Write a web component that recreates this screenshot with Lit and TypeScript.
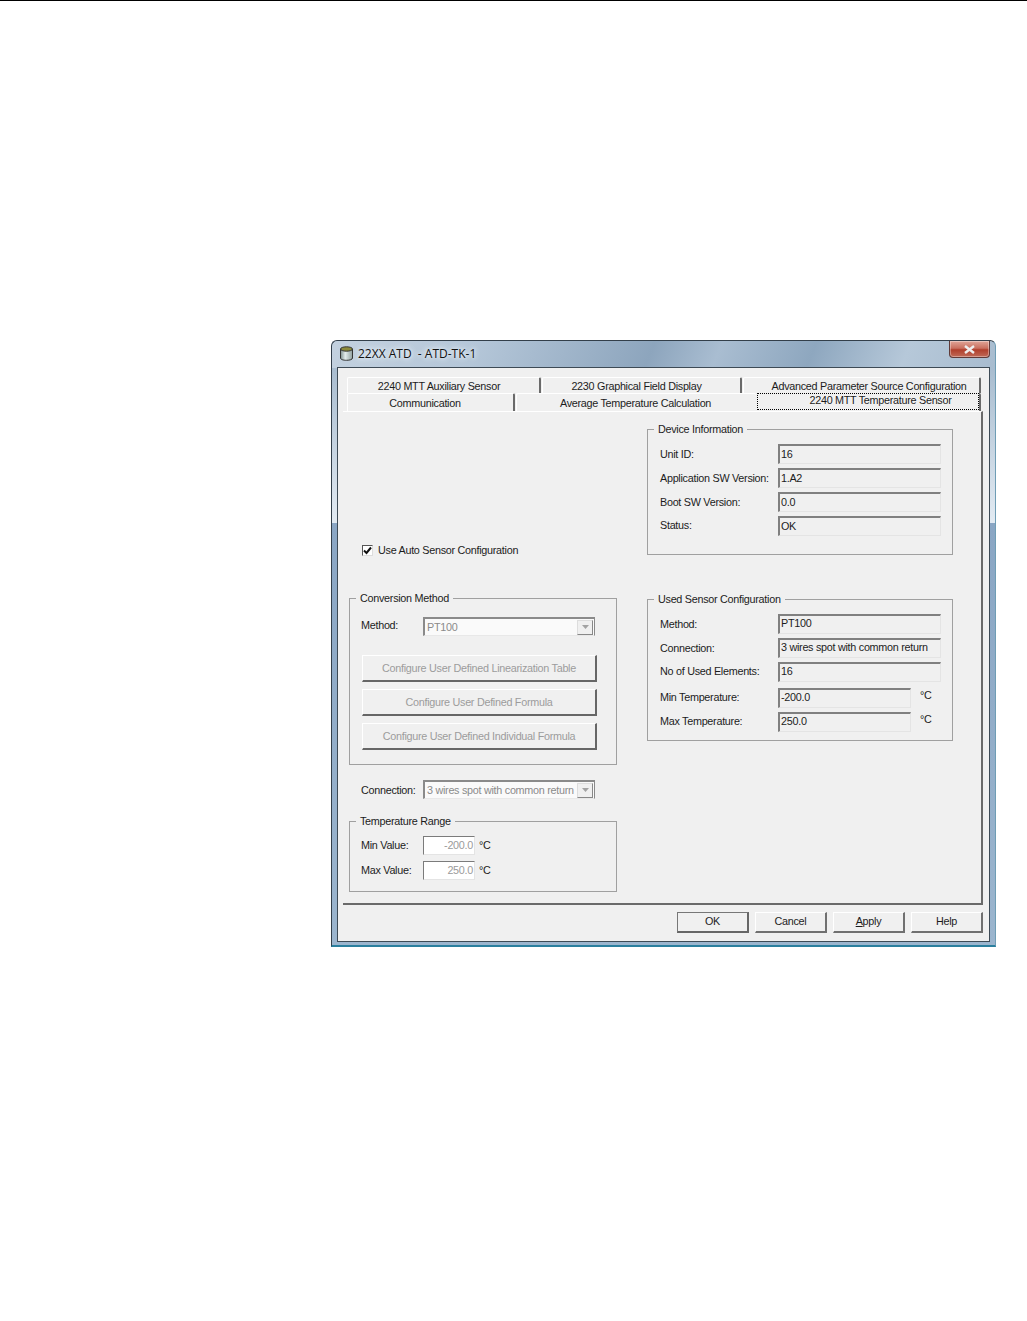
import { LitElement, html, css } from "lit";
import { customElement } from "lit/decorators.js";

const arrow = html`<svg width="7" height="4" viewBox="0 0 7 4"><path d="M0 0h7L3.5 4z" fill="#a3a3a3"/></svg>`;

@customElement("app-root")
export class AppRoot extends LitElement {
  static styles = css`
    :host { display: block; width: 1027px; height: 1321px; background: #fff; box-sizing: border-box; border-top: 1px solid #000; padding: 339px 0 0 331px; font-family: "Liberation Sans", Arial, sans-serif; font-size: 10.8px; letter-spacing: -0.28px; color: #1c1c1c; }
    * { box-sizing: border-box; }
    .window { width: 665px; height: 607px; border: 1px solid #333f4a; border-right-color: #6f9db5; border-bottom: 2px solid #2a7f9e; border-radius: 6px 6px 0 0; padding: 0 5px 3px; display: flex; flex-direction: column;
      background: linear-gradient(112deg, #c3d1df 0%, #b4c6d8 22%, #8da5bd 48%, #a9bdd1 58%, #8ea7bf 72%, #b6c8d9 86%, #a8bccf 100%) top / 100% 27px no-repeat, linear-gradient(180deg, #a8bccf 27px, #e3ebf3 182px, #8aa6c4 182px, #9bb5ce 100%); }
    .title { height: 26px; flex: none; display: flex; align-items: center; gap: 4px; padding: 0 0 2px 2px; position: relative; font-family: "Open Sans", "Liberation Sans", sans-serif; font-size: 12px; letter-spacing: 0; color: #111; }
    .title span { text-shadow: 0 0 6px #e6eef6, 0 0 6px #e6eef6, 0 0 3px #e6eef6; white-space: pre; }
    .close { position: absolute; right: 0; top: 0; width: 41px; height: 17px; border: 1px solid #5f3a38; border-top: none; border-radius: 0 0 4px 4px; background: linear-gradient(180deg, #e0a598 0%, #c9705f 45%, #b03f2c 55%, #c06a58 100%); display: flex; align-items: center; justify-content: center; box-shadow: inset 0 0 0 1px rgba(255,255,255,.35); }
    .client { flex: 1; background: #f0f0f0; border: 1px solid #3d4a55; display: flex; flex-direction: column; padding: 9px 6px 7px 5px; }
    .tabrow { display: flex; height: 16px; margin-left: 4px; margin-right: 2px; gap: 1px; }
    .tabrow.two { height: 18px; }
    .tab { display: flex; align-items: center; justify-content: center; background: #f0f0f0; border-top: 1px solid #fff; border-left: 1px solid #fff; border-right: 2px solid #6a6a6a; border-radius: 2px 2px 0 0; white-space: nowrap; padding-top: 1px; flex: none; }
    .t1 { width: 194px; padding-right: 9px; } .t2 { width: 200px; padding-right: 10px; } .t3 { width: 238px; padding-left: 15px; }
    .r1 { width: 168px; padding-right: 11px; } .r2 { width: 240px; border-right: none; padding-right: 2px; }
    .active { width: 224px; height: 18px; z-index: 1; position: relative; background: #f0f0f0; border-top: none; border-left: none; border-right: 2px solid #6a6a6a; padding: 0; align-items: flex-start; }
    .active span { display: block; width: 100%; height: 17px; line-height: 13px; border: 1px dotted #000; text-align: center; padding-left: 25px; }
    .panel { height: 494px; border-top: 1px solid #fff; border-right: 2px solid #6a6a6a; border-bottom: 2px solid #6a6a6a; display: grid; grid-template-columns: 268px 306px; column-gap: 30px; padding-left: 6px; background: #f0f0f0; }
    .col { display: flex; flex-direction: column; }
    .group { position: relative; border: 1px solid #a0a0a0; }
    .legend { position: absolute; left: 6px; top: -8px; background: #f0f0f0; padding: 0 4px; line-height: 14px; white-space: nowrap; }
    .check { margin: 132px 0 0 13px; height: 12px; display: flex; align-items: center; gap: 5px; }
    .box { width: 11px; height: 11px; background: #fff; border: 1px solid #555; border-right-color: #ddd; border-bottom-color: #ddd; display: flex; align-items: center; justify-content: center; }
    .conv { margin-top: 42px; height: 167px; padding: 18px 0 0 11px; }
    .conv .lbl { margin-top: -3px; }
    .row { display: flex; align-items: center; }
    .lbl { width: 62px; }
    .combo { width: 172px; height: 19px; background: #fafafa; border: 2px solid #8a8a8a; border-right-width: 1px; border-bottom: 1px solid #e8e8e8; display: flex; align-items: center; justify-content: space-between; color: #8a8a8a; padding-left: 2px; padding-right: 1px; white-space: nowrap; overflow: hidden; }
    .combo i { width: 16px; height: 15px; background: #f0f0f0; border: 1px solid #ddd; border-right-color: #888; border-bottom-color: #888; display: flex; align-items: center; justify-content: center; flex: none; }
    .btns { display: flex; flex-direction: column; gap: 7px; margin: 19px 0 0 1px; width: 235px; }
    .dbtn { height: 27px; background: #f0f0f0; border: 1px solid #e2e2e2; border-top-color: #fff; border-left-color: #fff; border-right: 2px solid #666; border-bottom: 2px solid #666; color: #9c9c9c; display: flex; align-items: center; justify-content: center; font: inherit; letter-spacing: inherit; padding: 0; }
    .conn { margin: 15px 0 0 12px; }
    .range { margin-top: 22px; height: 71px; padding: 14px 0 0 11px; display: flex; flex-direction: column; gap: 6px; }
    .range .lbl, .range .tu { margin-top: -2px; }
    .num { width: 52px; height: 19px; background: #fff; border: 1px solid #7b7b7b; border-right-color: #e4e4e4; border-bottom-color: #e4e4e4; color: #9a9a9a; text-align: right; padding-right: 1px; line-height: 17px; margin-right: 4px; }
    .dev { margin-top: 17px; height: 126px; padding: 14px 0 0 12px; display: flex; flex-direction: column; gap: 4px; }
    .dev .field { line-height: 17px; }
    .used { margin-top: 44px; height: 142px; padding: 14px 0 0 12px; display: flex; flex-direction: column; gap: 4px; }
    .lab2 { width: 118px; white-space: nowrap; }
    .up .lab2 { margin-top: -2px; }
    .field { width: 163px; height: 20px; border: 1px solid #e4e4e4; border-top: 2px solid #808080; border-left: 2px solid #808080; padding-left: 1px; line-height: 15px; white-space: nowrap; }
    .short { width: 133px; }
    .unit { margin-left: 9px; margin-top: -6px; }
    .gap2 { margin-top: 2px; }
    .foot { flex: 1; display: flex; justify-content: flex-end; gap: 6px; padding-top: 7px; }
    .bbtn { width: 72px; height: 21px; background: #f0f0f0; border: 1px solid #fff; border-right: 2px solid #707070; border-bottom: 2px solid #707070; color: #1c1c1c; display: flex; align-items: center; justify-content: center; font: inherit; letter-spacing: inherit; padding: 0 0 2px; }
    .bbtn.def { border: 1px solid #777; border-right: 2px solid #666; border-bottom: 2px solid #666; }
    u { text-decoration: underline; }
  `;

  row(label: string, value: string, cls = "", unit = false) {
    return html`<div class="row ${cls}"><div class="lab2">${label}</div><div class="field ${unit ? "short" : ""}">${value}</div>${unit ? html`<div class="unit">°C</div>` : ""}</div>`;
  }

  render() {
    return html`<div class="window">
      <div class="title">
        <svg width="15" height="15" viewBox="0 0 15 15"><defs><linearGradient id="c" x1="0" x2="1"><stop offset="0" stop-color="#7f8f8f"/><stop offset=".4" stop-color="#e4ecec"/><stop offset="1" stop-color="#8f9f9f"/></linearGradient></defs><path d="M1.5 3v9c0 1.5 2.7 2.3 6 2.3s6-.8 6-2.3V3" fill="url(#c)" stroke="#333"/><ellipse cx="7.5" cy="3" rx="6" ry="2.2" fill="#8c8a3a" stroke="#333"/></svg>
        <span>22XX ATD  - ATD-TK-1</span>
        <div class="close"><svg width="13" height="9" viewBox="0 0 13 9"><path d="M2 1l9 7M11 1L2 8" stroke="#eee" stroke-width="2.4"/></svg></div>
      </div>
      <div class="client">
        <div class="tabrow"><div class="tab t1">2240 MTT Auxiliary Sensor</div><div class="tab t2">2230 Graphical Field Display</div><div class="tab t3">Advanced Parameter Source Configuration</div></div>
        <div class="tabrow two"><div class="tab r1">Communication</div><div class="tab r2">Average Temperature Calculation</div><div class="tab active"><span>2240 MTT Temperature Sensor</span></div></div>
        <div class="panel">
          <div class="col">
            <div class="check"><div class="box"><svg width="9" height="9" viewBox="0 0 9 9"><path d="M1 4.5l2.5 2.5L8 1.5" fill="none" stroke="#111" stroke-width="2"/></svg></div>Use Auto Sensor Configuration</div>
            <div class="group conv"><div class="legend">Conversion Method</div>
              <div class="row"><div class="lbl">Method:</div><div class="combo">PT100<i>${arrow}</i></div></div>
              <div class="btns"><button class="dbtn">Configure User Defined Linearization Table</button><button class="dbtn">Configure User Defined Formula</button><button class="dbtn">Configure User Defined Individual Formula</button></div>
            </div>
            <div class="row conn"><div class="lbl">Connection:</div><div class="combo">3 wires spot with common return<i>${arrow}</i></div></div>
            <div class="group range"><div class="legend">Temperature Range</div>
              <div class="row"><div class="lbl">Min Value:</div><div class="num">-200.0</div><span class="tu">°C</span></div>
              <div class="row"><div class="lbl">Max Value:</div><div class="num">250.0</div><span class="tu">°C</span></div>
            </div>
          </div>
          <div class="col">
            <div class="group dev"><div class="legend">Device Information</div>
              ${this.row("Unit ID:", "16")}${this.row("Application SW Version:", "1.A2")}${this.row("Boot SW Version:", "0.0")}${this.row("Status:", "OK", "up")}
            </div>
            <div class="group used"><div class="legend">Used Sensor Configuration</div>
              ${this.row("Method:", "PT100")}${this.row("Connection:", "3 wires spot with common return")}${this.row("No of Used Elements:", "16", "up")}${this.row("Min Temperature:", "-200.0", "gap2 up", true)}${this.row("Max Temperature:", "250.0", "up", true)}
            </div>
          </div>
        </div>
        <div class="foot"><button class="bbtn def">OK</button><button class="bbtn">Cancel</button><button class="bbtn"><span><u>A</u>pply</span></button><button class="bbtn">Help</button></div>
      </div>
    </div>`;
  }
}
